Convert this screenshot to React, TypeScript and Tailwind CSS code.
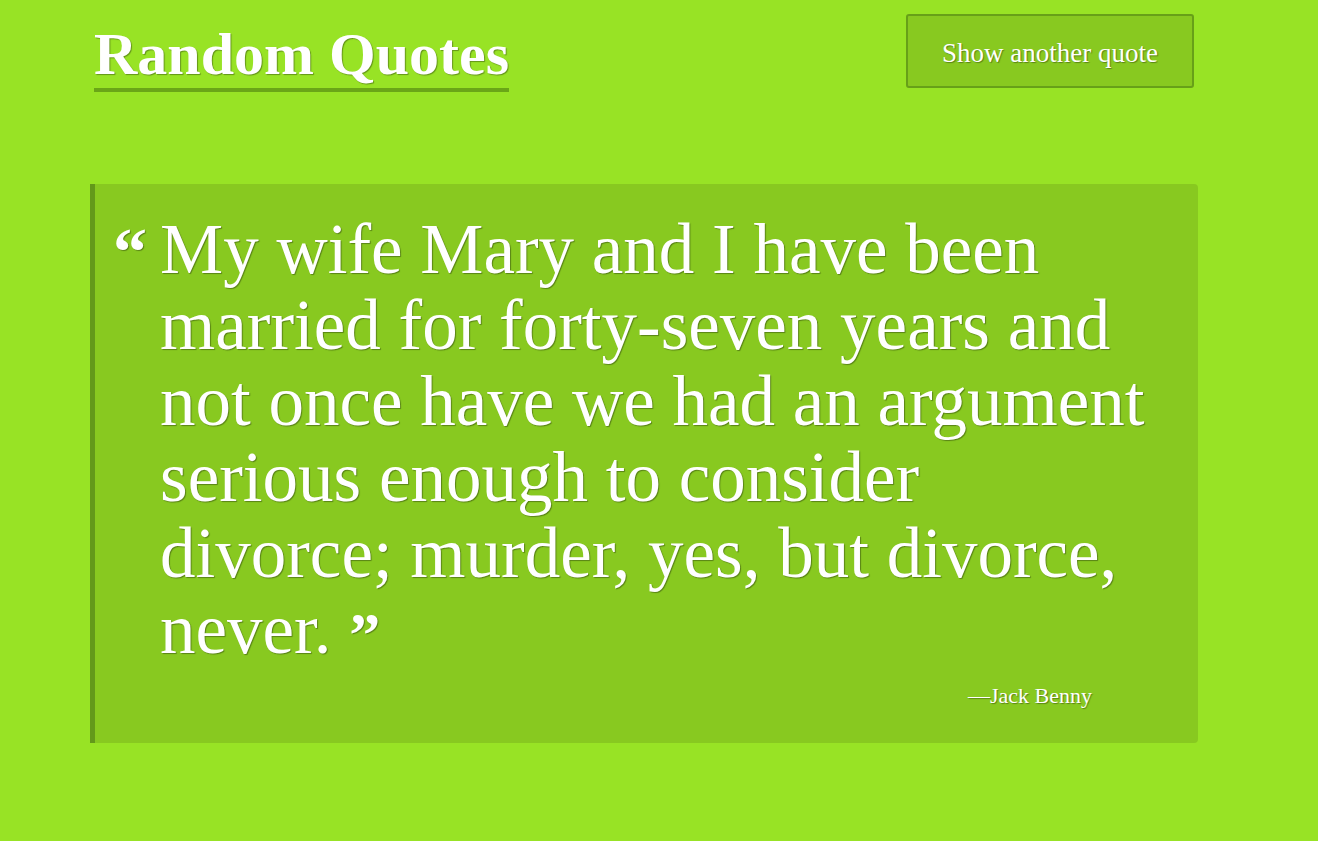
const lines = [
  "My wife Mary and I have been",
  "married for forty-seven years and",
  "not once have we had an argument",
  "serious enough to consider",
  "divorce; murder, yes, but divorce,",
];

const shadow = "[text-shadow:1px_1px_1px_rgba(0,0,0,0.35)]";

const App = () => {
  return (
    <div className="min-h-[841px] bg-[#98e325] font-['Liberation_Serif',serif] text-white">
      <div className="ml-[90px] w-[1108px] pt-[14px]">
        <header className="flex items-start justify-between pl-[4px] pr-[4px]">
          <h1 className={`mt-[10px] border-b-[4px] border-[#6aa617] pb-[4px] text-[60px] leading-[60px] font-bold ${shadow}`}>
            Random Quotes
          </h1>
          <button className={`h-[74px] w-[288px] rounded-[3px] border-2 border-[#67a018] bg-[#88c920] pt-[5px] text-[27px] ${shadow}`}>
            Show another quote
          </button>
        </header>

        <blockquote className="relative mt-[92px] rounded-r-[4px] border-l-[5px] border-[#63991a] bg-[#88c920] pt-[27px] pb-[31px] pl-[65px] pr-[40px]">
          <span className={`absolute left-[18px] top-[36px] text-[68px] leading-[64px] font-bold ${shadow}`}>“</span>
          <div className={`text-[71px] leading-[76px] whitespace-nowrap ${shadow}`}>
            {lines.map((l) => (
              <div key={l}>{l}</div>
            ))}
            <div>
              never. <span className="relative top-[5px] align-top text-[62px] leading-[76px] font-bold">”</span>
            </div>
          </div>
          <p className={`mt-[12px] pr-[66px] text-right text-[22px] ${shadow}`}>—Jack Benny</p>
        </blockquote>
      </div>
    </div>
  );
};

export default App;
